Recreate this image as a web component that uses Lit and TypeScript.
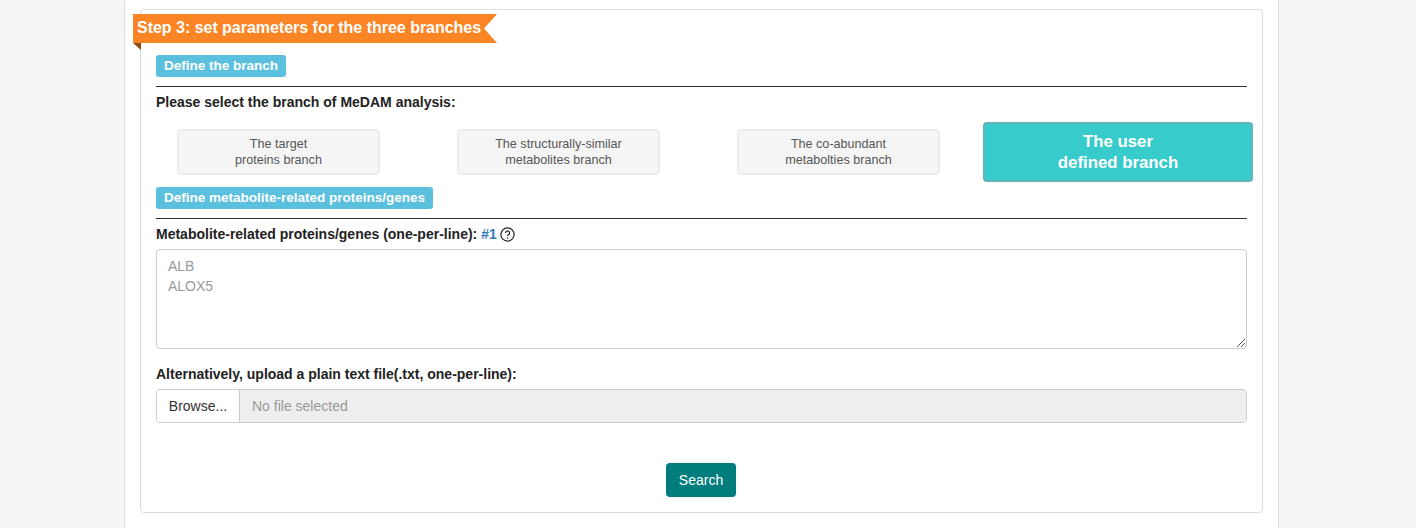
import { LitElement, html, css } from "lit";
import { customElement } from "lit/decorators.js";

@customElement("app-root")
export class AppRoot extends LitElement {
  static styles = css`
    :host { display: block; height: 528px; overflow: hidden; background: #f5f5f5; font-family: "Liberation Sans", Arial, sans-serif; color: #222; }
    * { box-sizing: border-box; }
    .page { width: 1155px; height: 528px; margin-left: 124px; background: #fff; border-left: 1px solid #ddd; border-right: 1px solid #ddd; padding: 9px 15px 0; }
    .card { position: relative; width: 1123px; height: 504px; border: 1px solid #ddd; border-radius: 4px; padding: 45px 15px 0; }
    .ribbon { position: absolute; left: -8px; top: 4px; width: 364px; height: 29px; background: #fb8524; color: #fff; font-size: 16px; letter-spacing: -0.02px; font-weight: 700; line-height: 27px; padding-left: 4px; white-space: nowrap; clip-path: polygon(0 0, 100% 0, calc(100% - 13px) 50%, 100% 100%, 0 100%); }
    .fold { position: absolute; left: -8px; top: 33px; width: 0; height: 0; border-top: 7px solid #8a4a12; border-left: 8px solid transparent; }
    .tag { display: inline-block; height: 22px; line-height: 21px; padding: 0 8px; background: #5bc0de; color: #fff; font-size: 13.5px; font-weight: 700; border-radius: 3px; vertical-align: top; }
    .tagrow { height: 22px; }
    .rule { height: 1px; background: #333; margin-top: 9px; }
    .label { font-size: 14px; font-weight: 700; line-height: 20px; color: #222; white-space: nowrap; display: flex; align-items: center; }
    .l1 { margin-top: 5px; }
    .branches { display: grid; grid-template-columns: repeat(4, 280px); margin: 6px -17.5px 0; height: 69px; align-items: start; justify-items: center; }
    .b { width: 203px; height: 46px; margin-top: 11px; background: #f5f5f5; border: 2px solid #ececec; border-radius: 4px; color: #555; font-size: 12.6px; line-height: 16px; text-align: center; display: flex; align-items: center; justify-content: center; }
    .b.on { width: 270px; height: 60px; margin-top: 4px; margin-right: 1px; background: #37cbcb; border: 2px solid #62b4b8; color: #fff; font-size: 16.8px; font-weight: 700; line-height: 21px; }
    .l2 { margin-top: 5px; }
    .l2 .ref { color: #337ab7; margin-left: 4px; }
    .l2 svg { margin-left: 3px; }
    .ta { height: 100px; margin-top: 5px; border: 1px solid #ccc; border-radius: 4px; padding: 6px 11px; font-size: 14px; line-height: 20px; color: #999; position: relative; }
    .grip { position: absolute; right: 0; bottom: 0; }
    .l3 { margin-top: 15px; }
    .file { display: flex; height: 34px; margin-top: 5px; border: 1px solid #ccc; border-radius: 4px; font-size: 14px; overflow: hidden; }
    .browse { width: 83px; border-right: 1px solid #ccc; color: #333; display: flex; align-items: center; justify-content: center; background: #fff; }
    .fname { flex: 1; background: #eee; color: #999; display: flex; align-items: center; padding-left: 12px; }
    .act { display: flex; justify-content: center; margin-top: 40px; padding-right: 1px; }
    .search { width: 70px; height: 34px; background: #017d7d; color: #fff; font-size: 14px; border-radius: 4px; display: flex; align-items: center; justify-content: center; }
  `;

  render() {
    return html`<div class="page"><div class="card">
      <div class="ribbon">Step 3: set parameters for the three branches</div>
      <div class="fold"></div>
      <div class="tagrow"><span class="tag">Define the branch</span></div>
      <div class="rule"></div>
      <div class="label l1">Please select the branch of MeDAM analysis:</div>
      <div class="branches">
        <div class="b">The target<br />proteins branch</div>
        <div class="b">The structurally-similar<br />metabolites branch</div>
        <div class="b">The co-abundant<br />metabolties branch</div>
        <div class="b on">The user<br />defined branch</div>
      </div>
      <div class="tagrow tag2"><span class="tag">Define metabolite-related proteins/genes</span></div>
      <div class="rule"></div>
      <div class="label l2">Metabolite-related proteins/genes (one-per-line): <span class="ref">#1</span>
        <svg width="15" height="15" viewBox="0 0 15 15" fill="none" stroke="#222" stroke-width="1.2"><circle cx="7.5" cy="7.5" r="6.6"/><path d="M5.5 6a2 2 0 1 1 3 1.7c-.6.3-1 .7-1 1.3" stroke-width="1.2"/><circle cx="7.5" cy="11" r=".8" fill="#222" stroke="none"/></svg>
      </div>
      <div class="ta">ALB<br />ALOX5
        <svg class="grip" width="10" height="10" viewBox="0 0 10 10" stroke="#555" stroke-width="1"><path d="M1 9 9 1M5 9 9 5"/></svg>
      </div>
      <div class="label l3">Alternatively, upload a plain text file(.txt, one-per-line):</div>
      <div class="file"><div class="browse">Browse...</div><div class="fname">No file selected</div></div>
      <div class="act"><div class="search">Search</div></div>
    </div></div>`;
  }
}
